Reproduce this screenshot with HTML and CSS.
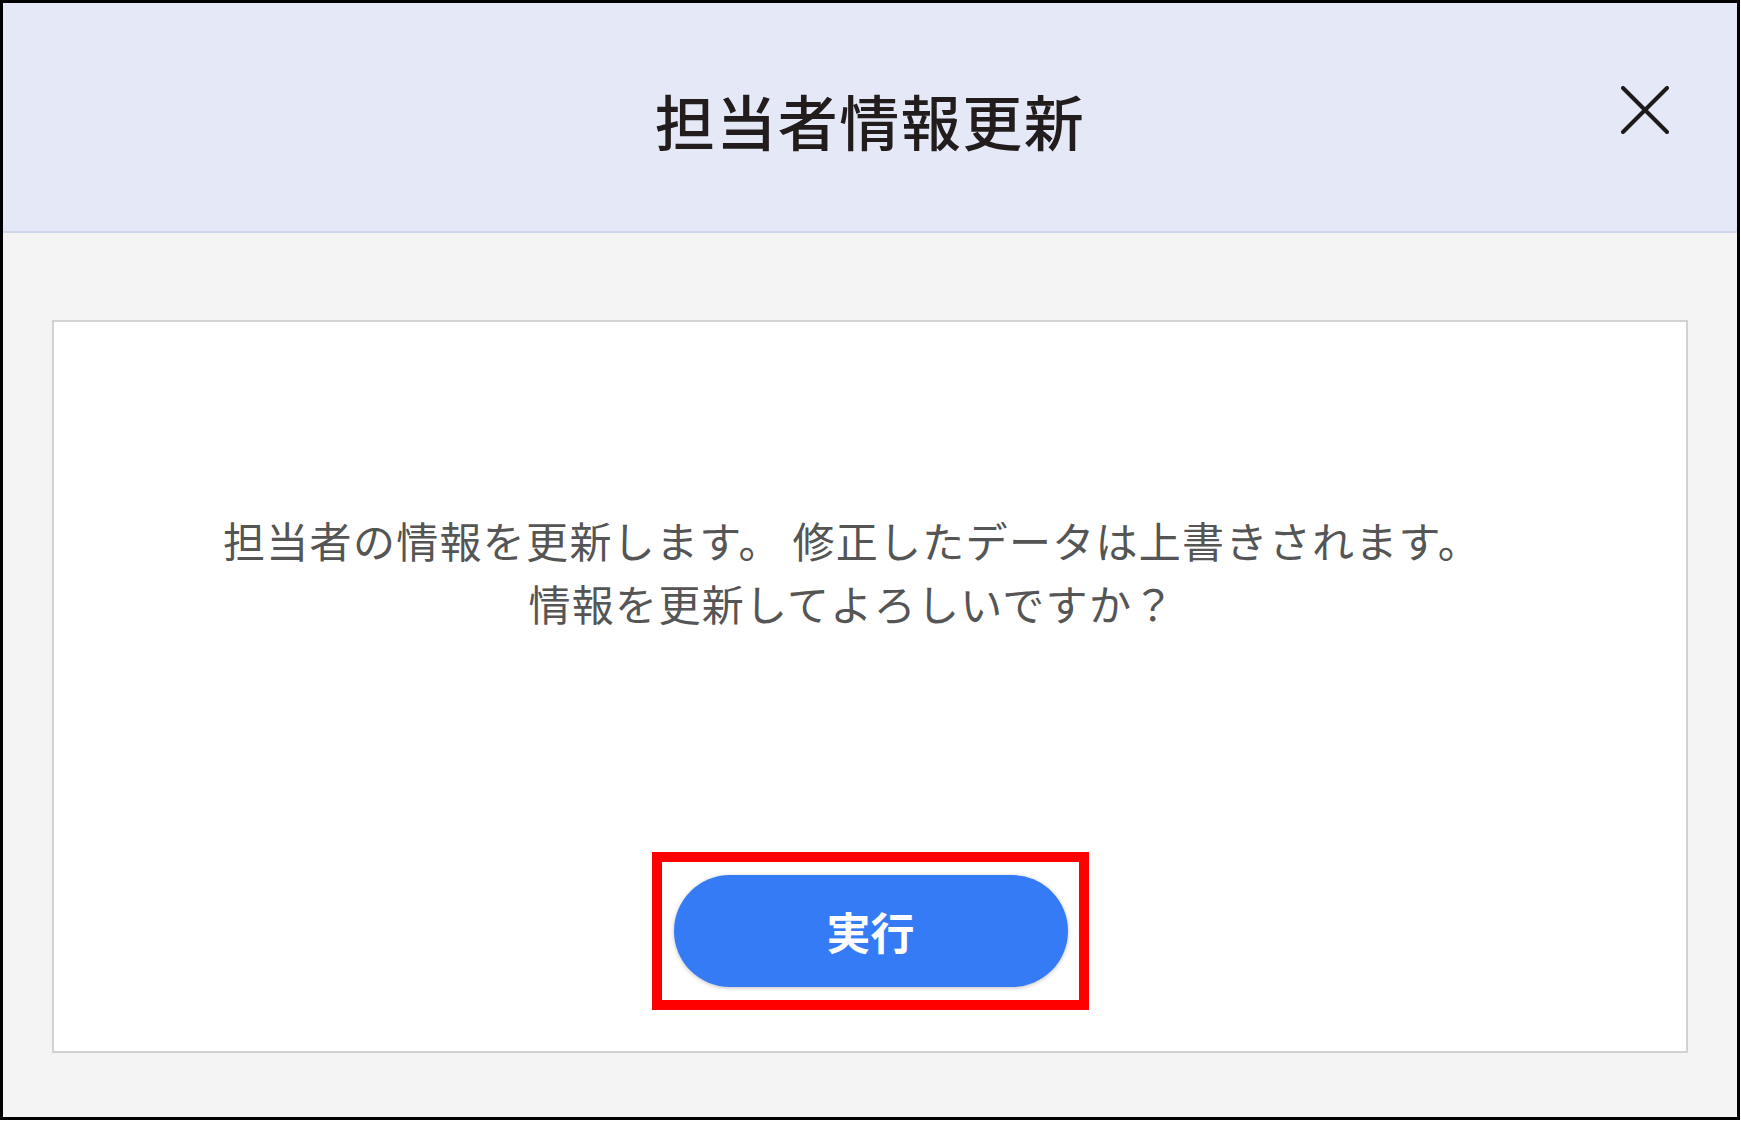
FILE: index.html
```html
<!DOCTYPE html>
<html lang="ja">
<head>
<meta charset="utf-8">
<title>担当者情報更新</title>
<link rel="stylesheet" href="styles.css">
</head>
<body>
<div class="frame">
  <header class="dialog-header">
    <span class="spacer"></span>
    <h1 class="dialog-title">担当者情報更新</h1>
    <button class="close-btn" type="button" aria-label="閉じる">
      <svg width="48" height="48" viewBox="0 0 48 48" aria-hidden="true">
        <path d="M2 2 L46 46 M46 2 L2 46" stroke="#1e1a1a" stroke-width="4" stroke-linecap="round" fill="none"/>
      </svg>
    </button>
  </header>
  <main class="dialog-body">
    <section class="card">
      <p class="message">担当者の情報を更新します。 修正したデータは上書きされます。<br>情報を更新してよろしいですか？</p>
      <div class="highlight">
        <button class="exec-btn" type="button">実行</button>
      </div>
    </section>
  </main>
</div>
</body>
</html>
```
FILE: styles.css
```css
html, body {
  margin: 0;
  padding: 0;
  background: #ffffff;
}

body {
  font-family: "Noto Sans CJK JP", "Noto Sans", sans-serif;
}

.frame {
  box-sizing: border-box;
  width: 1740px;
  height: 1120px;
  border: 3px solid #000000;
  display: flex;
  flex-direction: column;
  background: #f4f4f4;
}

.dialog-header {
  height: 228px;
  flex: none;
  background: #e4e8f7;
  border-bottom: 2px solid #d0d6eb;
  display: grid;
  grid-template-columns: 1fr auto 1fr;
  align-items: center;
}

.dialog-title {
  margin: 0;
  padding-top: 6px;
  font-size: 60px;
  line-height: 1;
  font-weight: 500;
  color: #221c1c;
  letter-spacing: 1.5px;
}

.close-btn {
  justify-self: end;
  margin-right: 68px;
  margin-bottom: 14px;
  width: 48px;
  height: 48px;
  padding: 0;
  border: none;
  background: transparent;
  display: flex;
}

.dialog-body {
  flex: 1;
  padding: 87px 49px 0 49px;
}

.card {
  box-sizing: border-box;
  height: 733px;
  background: #ffffff;
  border: 2px solid #d2d2d2;
  display: flex;
  flex-direction: column;
  align-items: center;
}

.message {
  margin: 186px 0 0 0;
  padding-right: 36px;
  font-size: 42px;
  line-height: 63px;
  letter-spacing: 1.3px;
  color: #555555;
  text-align: center;
  font-weight: 400;
}

.highlight {
  margin-top: auto;
  margin-bottom: 41px;
  border: 10px solid #ff0000;
  padding: 13px 11px 13px 12px;
  background: #ffffff;
  display: flex;
}

.exec-btn {
  width: 394px;
  height: 112px;
  border: none;
  border-radius: 56px;
  background: #367bf6;
  color: #ffffff;
  font-family: "Noto Sans CJK JP", sans-serif;
  font-size: 44px;
  font-weight: 700;
  box-shadow: 0 1px 4px rgba(0, 0, 0, 0.25);
}
```
